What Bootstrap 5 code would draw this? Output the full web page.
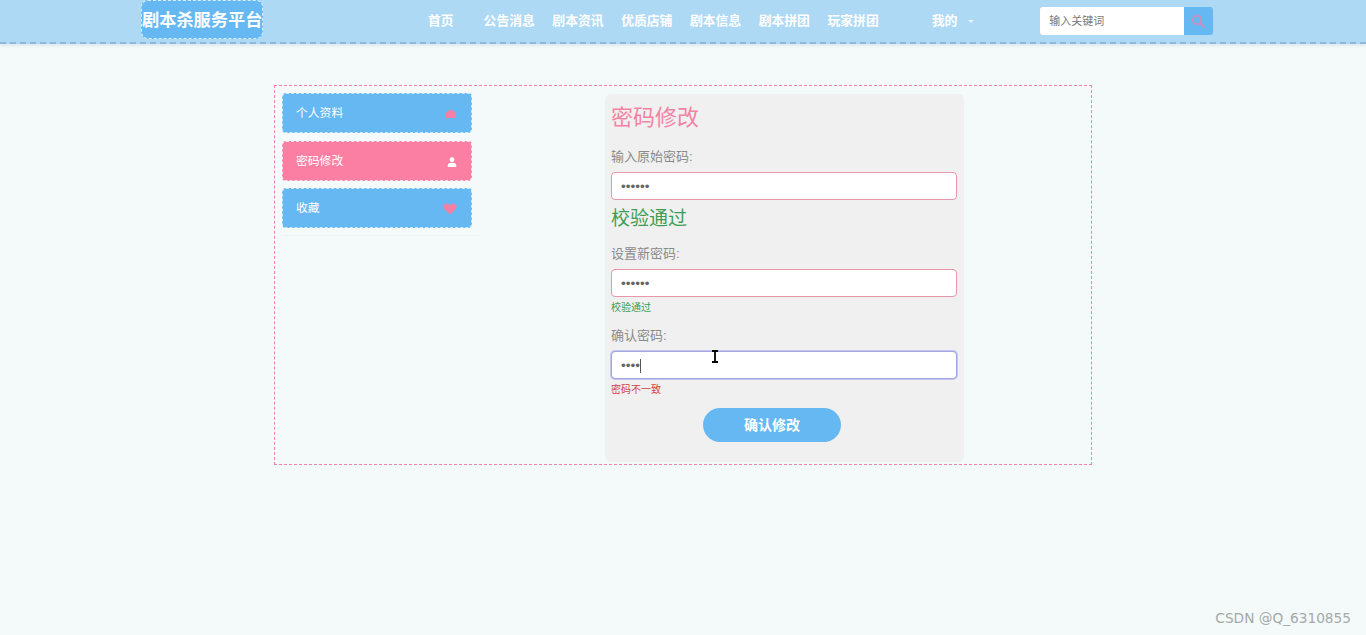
<!DOCTYPE html>
<html lang="zh-CN">
<head>
    <meta charset="UTF-8">
    <meta name="viewport" content="width=device-width, initial-scale=1.0">
    <title>密码修改</title>
    <link rel="stylesheet" href="https://cdn.jsdelivr.net/npm/bootstrap@5.3.0/dist/css/bootstrap.min.css">
    <style>
        body {
            background: #f4f9f9;
            font-family: "Liberation Sans", "Noto Sans CJK SC", sans-serif;
            height: 635px;
            overflow: hidden;
            position: relative;
        }
        .top-bar {
            background: #aed9f4;
            height: 44px;
            border-bottom: 2px dashed #8fb8d4;
            padding: 0 0 0 141px;
            box-shadow: 0 1px 3px rgba(120, 160, 190, .25);
        }
        .site-logo {
            width: 122px;
            height: 39px;
            background: #65b8f2;
            border: 1px dashed #d8eefc;
            border-radius: 7px;
            color: #fff;
            font-size: 17.2px;
            font-weight: 700;
            line-height: 38px;
            white-space: nowrap;
            margin-right: 165px;
        }
        .top-link {
            color: #fff;
            font-size: 12.8px;
            font-weight: 700;
            line-height: 42px;
            white-space: nowrap;
            text-decoration: none;
        }
        .top-links { gap: 17.6px; }
        .link-home { margin-right: 12.4px; }
        .link-mine { margin-left: 53px; margin-right: 66px; }
        .mine-caret {
            display: inline-block;
            border-top: 3px solid #e8f4fc;
            border-left: 3px solid transparent;
            border-right: 3px solid transparent;
            margin-left: 11px;
            vertical-align: 2px;
        }
        .search-box { margin-top: 7px; height: 28px; }
        .search-input {
            width: 144px;
            border: 0;
            border-radius: 3px 0 0 3px;
            font-size: 11px;
            padding: 0 9px;
            color: #666;
            background: #fff;
        }
        .search-input::placeholder { color: #777; opacity: 1; }
        .search-btn {
            width: 29px;
            padding: 0;
            border: 0;
            background: #65b8f2;
            border-radius: 0 3px 3px 0;
        }
        .main-box {
            width: 818px;
            height: 380px;
            margin: 41px 0 0 274px;
            border: 1px dashed #f283a5;
            padding: 8px 7px;
        }
        .side-menu { width: 190px; margin-top: -1px; }
        .side-wrap { width: 198px; margin-right: 125px; border-bottom: 1px solid #eef3f4; height: 142px; }
        .side-item {
            height: 40px;
            margin-bottom: 7.5px;
            background: #65b8f2;
            border: 1px dashed #cfe9fb;
            border-radius: 4px;
            color: #fff;
            font-size: 11.8px;
            padding: 2px 14px 0 13px;
            text-decoration: none;
        }
        .side-item.is-current { background: #fb7fa3; border-color: #fde0e9; }
        .form-panel {
            width: 359px;
            height: 368px;
            background: #f0f0f0;
            border-radius: 6px;
            padding: 0 7px 0 6px;
        }
        .form-title {
            font-size: 22px;
            font-weight: 400;
            line-height: 32px;
            color: #f283a5;
            margin: 8px 0 14px;
        }
        .form-label-text {
            display: block;
            font-size: 13px;
            line-height: 18px;
            color: #8a8a8a;
            margin-bottom: 6px;
        }
        .pwd-input {
            height: 28px;
            border: 1px solid #e896aa;
            border-radius: 4px;
            font-size: 13.5px;
            padding: 0 9px;
            color: #666;
            box-shadow: none;
        }
        .pwd-input.is-focus {
            border-color: #a3a5e2;
            box-shadow: 0 0 0 1px #c3c7ee;
        }
        .big-ok {
            font-size: 19px;
            line-height: 28px;
            color: #3c9e53;
            margin: 5px 0 12px;
        }
        .small-ok, .small-bad {
            font-size: 10px;
            line-height: 14px;
            margin: 4px 0 12px;
        }
        .small-ok { color: #3c9e53; }
        .small-bad { color: #d33f3f; margin-bottom: 11px; }
        .submit-btn {
            width: 138px;
            height: 34px;
            margin-left: 92px;
            background: #65b8f2;
            border: 0;
            border-radius: 17px;
            color: #fff;
            font-size: 14px;
            font-weight: 700;
        }
        .text-cursor { position: absolute; left: 711px; top: 350px; }
        .input-caret { position: absolute; left: 640px; top: 359px; width: 1px; height: 14px; background: #555; }
        .watermark {
            position: absolute;
            right: 15px;
            top: 609px;
            color: #a5a9ab;
            font-family: "DejaVu Sans", sans-serif;
            font-size: 13.7px;
            line-height: 18px;
        }
    </style>
</head>
<body>
    <nav class="top-bar d-flex align-items-start">
        <a class="site-logo d-block text-decoration-none" href="#">剧本杀服务平台</a>
        <div class="top-links d-flex">
            <a class="top-link link-home" href="#">首页</a>
            <a class="top-link" href="#">公告消息</a>
            <a class="top-link" href="#">剧本资讯</a>
            <a class="top-link" href="#">优质店铺</a>
            <a class="top-link" href="#">剧本信息</a>
            <a class="top-link" href="#">剧本拼团</a>
            <a class="top-link" href="#">玩家拼团</a>
        </div>
        <a class="top-link link-mine" href="#">我的<span class="mine-caret"></span></a>
        <div class="search-box d-flex">
            <input class="search-input" type="text" placeholder="输入关键词">
            <button class="search-btn d-flex align-items-center justify-content-center" type="button" aria-label="搜索">
                <svg width="15" height="15" viewBox="0 0 15 15" fill="none" stroke="#e884b4" stroke-width="1.6"><circle cx="6" cy="6" r="4.2"/><path d="M9.2 9.2L13.5 13.5"/></svg>
            </button>
        </div>
    </nav>

    <div class="main-box d-flex">
        <div class="side-wrap">
            <div class="side-menu">
                <a class="side-item d-flex align-items-center justify-content-between" href="#">
                    <span>个人资料</span>
                    <svg width="12" height="12" viewBox="0 0 12 12" fill="#f57fa5"><path d="M6 1.5L11 4.5V10H1V4.5Z"/></svg>
                </a>
                <a class="side-item is-current d-flex align-items-center justify-content-between" href="#">
                    <span>密码修改</span>
                    <svg width="10" height="10" viewBox="0 0 10 10" fill="#fff"><circle cx="5" cy="2.7" r="2.4"/><path d="M.8 10V8.2C.8 6.6 2.4 5.8 5 5.8S9.2 6.6 9.2 8.2V10Z"/></svg>
                </a>
                <a class="side-item d-flex align-items-center justify-content-between" href="#">
                    <span>收藏</span>
                    <svg width="14" height="12" viewBox="0 0 14 12" fill="#f57fa5"><path d="M7 11.5L1.2 6A3.3 3.3 0 0 1 5.8 1.3L7 2.5L8.2 1.3A3.3 3.3 0 0 1 12.8 6Z"/></svg>
                </a>
            </div>
        </div>
        <form class="form-panel">
            <h2 class="form-title">密码修改</h2>
            <label class="form-label-text">输入原始密码:</label>
            <input class="form-control pwd-input" type="password" value="123456">
            <div class="big-ok">校验通过</div>
            <label class="form-label-text">设置新密码:</label>
            <input class="form-control pwd-input" type="password" value="123456">
            <div class="small-ok">校验通过</div>
            <label class="form-label-text">确认密码:</label>
            <input class="form-control pwd-input is-focus" type="password" value="1234">
            <div class="small-bad">密码不一致</div>
            <button class="submit-btn" type="button">确认修改</button>
        </form>
    </div>

    <span class="input-caret"></span>
    <svg class="text-cursor" width="8" height="13" viewBox="0 0 8 13" fill="none" stroke="#000" stroke-width="1.8"><path d="M1 1H7M4 1V12M1 12H7"/></svg>
    <div class="watermark">CSDN @Q_6310855</div>
</body>
</html>
